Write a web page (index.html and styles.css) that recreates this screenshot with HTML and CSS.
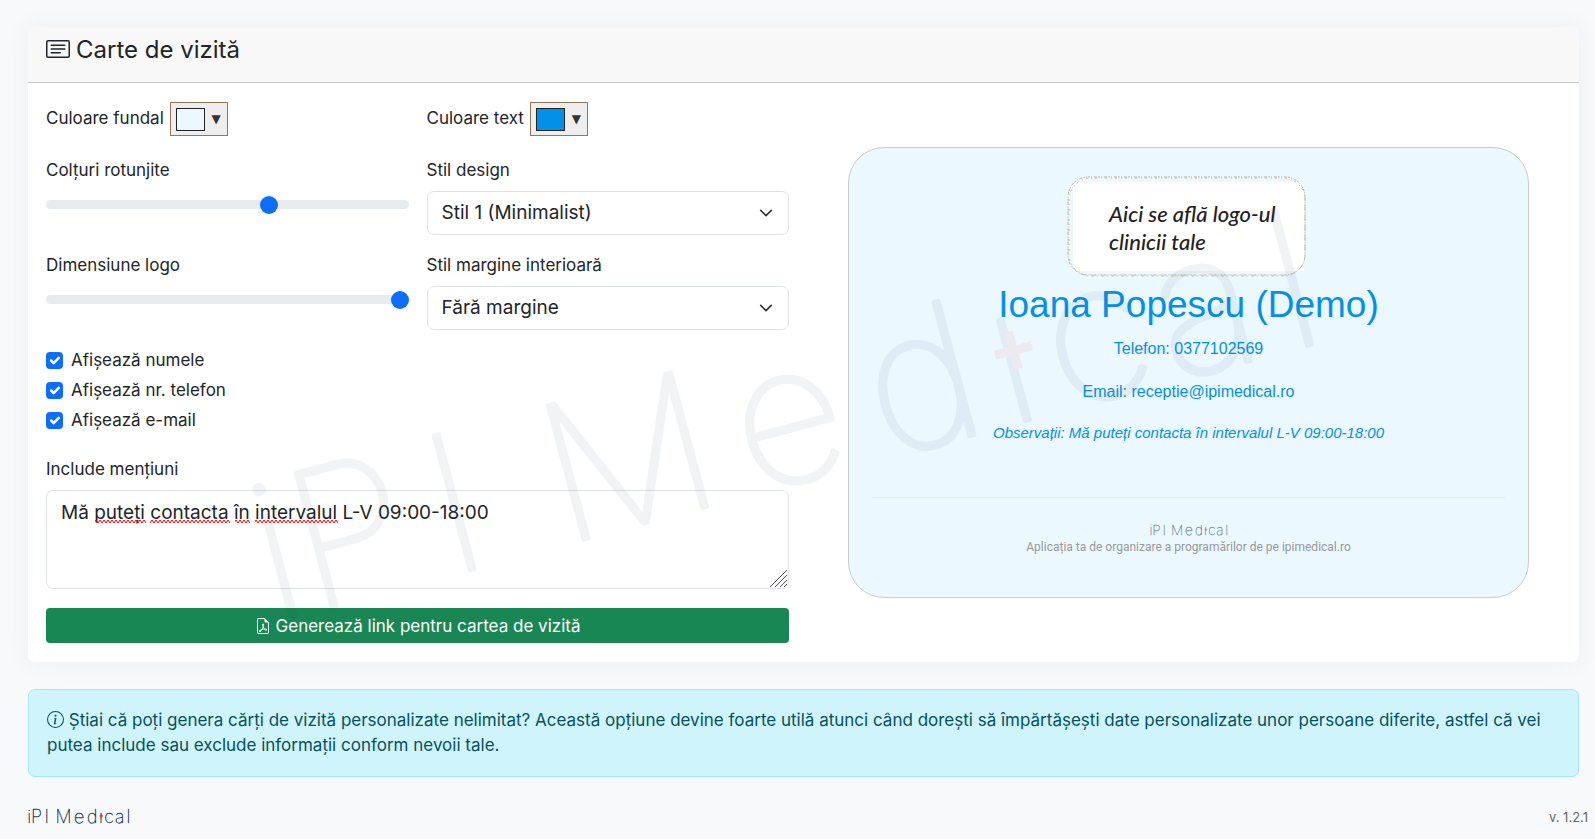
FILE: index.html
```html
<!DOCTYPE html>
<html lang="ro">
<head>
<meta charset="utf-8">
<meta name="viewport" content="width=device-width, initial-scale=1">
<title>Carte de vizită</title>
<link rel="stylesheet" href="styles.css">
</head>
<body>
<main class="page">
  <section class="card">
    <header class="card-header">
      <svg class="title-icon" viewBox="0 0 16 16" fill="currentColor" aria-hidden="true"><path d="M14.5 3a.5.5 0 0 1 .5.5v9a.5.5 0 0 1-.5.5h-13a.5.5 0 0 1-.5-.5v-9a.5.5 0 0 1 .5-.5zm-13-1A1.5 1.5 0 0 0 0 3.500v9A1.500 1.500 0 0 0 1.500 14h13a1.500 1.500 0 0 0 1.500-1.500v-9A1.500 1.500 0 0 0 14.500 2z"/><path d="M3 5.500a.5.5 0 0 1 .5-.5h9a.5.5 0 0 1 0 1h-9a.5.5 0 0 1-.5-.5M3 8a.5.5 0 0 1 .5-.5h9a.5.5 0 0 1 0 1h-9A.5.5 0 0 1 3 8m0 2.500a.5.5 0 0 1 .5-.5h6a.5.5 0 0 1 0 1h-6a.5.5 0 0 1-.5-.5"/></svg>
      <h1 class="title">Carte de vizită</h1>
    </header>
    <div class="card-body">
      <form class="settings">
        <div class="pair pair-colors">
          <div class="color-field">
            <label for="bg-color">Culoare fundal</label>
            <button type="button" id="bg-color" class="picker"><span class="swatch swatch-light"></span><span class="arrow">▼</span></button>
          </div>
          <div class="color-field">
            <label for="text-color">Culoare text</label>
            <button type="button" id="text-color" class="picker"><span class="swatch swatch-blue"></span><span class="arrow">▼</span></button>
          </div>
        </div>
        <div class="pair">
          <div class="field">
            <label for="radius">Colțuri rotunjite</label>
            <input type="range" id="radius" class="range" min="0" max="100" value="62">
          </div>
          <div class="field">
            <label for="design">Stil design</label>
            <select id="design" class="select"><option>Stil 1 (Minimalist)</option></select>
          </div>
        </div>
        <div class="pair">
          <div class="field">
            <label for="logo-size">Dimensiune logo</label>
            <input type="range" id="logo-size" class="range" min="0" max="100" value="100">
          </div>
          <div class="field">
            <label for="inner-margin">Stil margine interioară</label>
            <select id="inner-margin" class="select"><option>Fără margine</option></select>
          </div>
        </div>
        <div class="checks">
          <label class="check"><input type="checkbox" checked> Afișează numele</label>
          <label class="check"><input type="checkbox" checked> Afișează nr. telefon</label>
          <label class="check"><input type="checkbox" checked> Afișează e-mail</label>
        </div>
        <div class="field">
          <label for="notes">Include mențiuni</label>
          <div class="notes-box">
            <textarea id="notes" class="notes" spellcheck="false">Mă puteți contacta în intervalul L-V 09:00-18:00</textarea>
            <svg class="squiggles" width="320" height="4" aria-hidden="true">
              <defs><pattern id="wave" width="4" height="4" patternUnits="userSpaceOnUse"><path d="M-1 0L1 3L3 0L5 3" fill="none" stroke="#f00"/></pattern></defs>
              <path fill="url(#wave)" d="M34 0h51v4h-51zM89 0h80v4h-80zM174 0h15v4h-15zM194 0h83v4h-83z"/>
            </svg>
            <svg class="grip" viewBox="0 0 17 17" aria-hidden="true"><path d="M0 17L17 0M5 17L17 5M10 17L17 10M14 17L17 14"/></svg>
          </div>
        </div>
        <button type="button" class="generate">
          <svg class="pdf-icon" viewBox="0 0 16 16" fill="currentColor" aria-hidden="true"><path d="M14 14V4.500L9.500 0H4a2 2 0 0 0-2 2v12a2 2 0 0 0 2 2h8a2 2 0 0 0 2-2M9.500 3A1.500 1.500 0 0 0 11 4.500h2V14a1 1 0 0 1-1 1H4a1 1 0 0 1-1-1V2a1 1 0 0 1 1-1h5.500z"/><path d="M4.603 14.087a.8.8 0 0 1-.438-.42c-.195-.388-.13-.776.08-1.102.198-.307.526-.568.897-.787a7.700 7.700 0 0 1 1.482-.645 20 20 0 0 0 1.062-2.227 7.300 7.300 0 0 1-.43-1.295c-.086-.4-.119-.796-.046-1.136.075-.354.274-.672.65-.823.192-.077.4-.12.602-.077a.7.7 0 0 1 .477.365c.088.164.12.356.127.538.007.188-.012.396-.047.614-.084.510-.27 1.134-.52 1.794a11 11 0 0 0 .98 1.686 5.800 5.800 0 0 1 1.334.05c.364.066.734.195.960.465.12.144.193.320.200.518.007.192-.047.382-.138.563a1.040 1.040 0 0 1-.354.416.86.86 0 0 1-.510.138c-.331-.014-.654-.196-.933-.417a5.700 5.700 0 0 1-.911-.950 11.700 11.700 0 0 0-1.997.406 11.300 11.300 0 0 1-1.020 1.510c-.292.350-.609.656-.927.787a.8.8 0 0 1-.580.029m1.379-1.901q-.250.115-.459.238c-.328.194-.541.383-.647.547-.094.145-.096.250-.040.361q.016.032.026.044l.035-.012c.137-.056.355-.235.635-.572a8 8 0 0 0 .450-.606m1.640-1.330a13 13 0 0 1 1.010-.193 12 12 0 0 1-.510-.858 21 21 0 0 1-.500 1.050zm2.446.450q.226.245.435.410c.240.190.407.253.498.256a.1.1 0 0 0 .070-.015.300.300 0 0 0 .094-.125.440.440 0 0 0 .059-.200.100.100 0 0 0-.026-.063c-.052-.062-.200-.152-.518-.209a4 4 0 0 0-.612-.053zM8.078 7.800a7 7 0 0 0 .200-.828q.046-.282.038-.465a.600.600 0 0 0-.032-.198.500.500 0 0 0-.145.040c-.087.035-.158.106-.196.283-.040.192-.030.469.046.822q.036.167.090.346z"/></svg>
          <span>Generează link pentru cartea de vizită</span>
        </button>
      </form>

      <div class="preview">
        <article class="visit-card">
          <svg class="clinic-logo" viewBox="0 0 240 101" role="img" aria-label="Logo clinică">
            <rect x="6" y="6" width="231" height="89" fill="#fff"/>
            <rect class="dots" x="1" y="1" width="237" height="98" rx="20"/>
            <rect class="dots dots-fine" x="2" y="2" width="236" height="98" rx="22"/>
            <text x="42" y="46">Aici se află logo-ul</text>
            <text x="42" y="74">clinicii tale</text>
          </svg>
          <h2 class="person">Ioana Popescu (Demo)</h2>
          <p class="contact">Telefon: 0377102569</p>
          <p class="contact">Email: receptie@ipimedical.ro</p>
          <p class="remark">Observații: Mă puteți contacta în intervalul L-V 09:00-18:00</p>
          <hr class="rule">
          <svg class="brand-small" viewBox="0 0 1070 160" role="img" aria-label="iPI Medical">
            <text class="wordmark" y="144" x="-8 31 174 238 292 487 625 752 809 922 1044">iPI Medıcal</text>
            <path class="cross" d="M777 50v38M758 69h38"/>
          </svg>
          <p class="tagline">Aplicația ta de organizare a programărilor de pe ipimedical.ro</p>
        </article>
      </div>
    </div>
  </section>

  <p class="info">
    <svg class="info-icon" viewBox="0 0 16 16" fill="currentColor" aria-hidden="true"><path d="M8 15A7 7 0 1 1 8 1a7 7 0 0 1 0 14m0 1A8 8 0 1 0 8 0a8 8 0 0 0 0 16"/><path d="m8.930 6.588-2.290.287-.082.380.450.083c.294.070.352.176.288.469l-.738 3.468c-.194.897.105 1.319.808 1.319.545 0 1.178-.252 1.465-.598l.088-.416c-.200.176-.492.246-.686.246-.275 0-.375-.193-.304-.533zM9 4.500a1 1 0 1 1-2 0 1 1 0 0 1 2 0"/></svg>
    Știai că poți genera cărți de vizită personalizate nelimitat? Această opțiune devine foarte utilă atunci când dorești să împărtășești date personalizate unor persoane diferite, astfel că vei putea include sau exclude informații conform nevoii tale.
  </p>
</main>

<footer class="footer">
  <svg class="brand" viewBox="0 0 1070 160" role="img" aria-label="iPI Medical">
    <text class="wordmark" y="144" x="-8 31 174 238 292 487 625 752 809 922 1044">iPI Medıcal</text>
    <path class="cross" d="M777 50v38M758 69h38"/>
  </svg>
  <span class="version">v. 1.2.1</span>
</footer>

<svg class="watermark" viewBox="0 0 1595 839" aria-hidden="true">
  <g transform="translate(245 485) rotate(-15)">
    <text class="wordmark" y="140" x="-8 31 174 238 292 487 625 752 809 922 1044">iPI Medıcal</text>
    <path class="cross" d="M777 50v38M758 69h38"/>
  </g>
</svg>
</body>
</html>
```
FILE: styles.css
```css
* { box-sizing: border-box; }

body {
  margin: 0;
  background: #f8f9fb;
  color: #212529;
  font-family: Inter, "Open Sans", sans-serif;
  font-size: 17px;
  line-height: 24px;
}

h1, h2, p { margin: 0; font-weight: 400; }

.page { padding: 27px 16px 0 28px; }

.card {
  background: #fff;
  border-radius: 7px;
  box-shadow: 0 0 28px rgba(0, 0, 0, 0.05);
}

.card-header {
  display: flex;
  gap: 6px;
  padding: 7px 18px 17px;
  background: #f8f8f8;
  border-bottom: 1px solid #c8c8c8;
  border-radius: 7px 7px 0 0;
}

.title { font-size: 24px; line-height: 31px; }
.title-icon { width: 24px; height: 24px; margin-top: 3px; }

.card-body {
  display: grid;
  grid-template-columns: 743fr 772fr;
  padding: 19px 18px;
}

.pair {
  display: grid;
  grid-template-columns: 1fr 1fr;
  gap: 18px;
  margin-bottom: 18px;
}
.pair-colors { margin-bottom: 22px; }

.color-field { display: flex; align-items: center; gap: 6px; height: 34px; }
.color-field label { margin-bottom: 3px; }

.picker {
  display: flex;
  align-items: center;
  justify-content: space-between;
  width: 58px;
  height: 34px;
  padding: 0 6px 0 5px;
  border: 1px solid #9c7454;
  background: #eee;
  color: #333;
}

.swatch { width: 29px; height: 23px; border: 1px solid #222; }
.swatch-light { background: #ecf8ff; }
.swatch-blue { background: #0390e8; }
.arrow { font: 12px/14px "DejaVu Sans", sans-serif; }

.field { display: flex; flex-direction: column; gap: 9px; }

.range {
  -webkit-appearance: none;
  appearance: none;
  width: 100%;
  height: 18px;
  margin: 4px 0 0;
  background: none;
}
.range::-webkit-slider-runnable-track { height: 9px; border-radius: 9px; background: #e9ecef; }
.range::-webkit-slider-thumb {
  -webkit-appearance: none;
  width: 18px;
  height: 18px;
  margin-top: -4px;
  border-radius: 50%;
  background: #0d6efd;
}

.select {
  -webkit-appearance: none;
  appearance: none;
  width: 100%;
  height: 44px;
  padding: 0 40px 0 14px;
  border: 1px solid #dee2e6;
  border-radius: 7px;
  background: #fff url("data:image/svg+xml,%3Csvg xmlns='http://www.w3.org/2000/svg' viewBox='0 0 16 16'%3E%3Cpath fill='none' stroke='%23343a40' stroke-linecap='round' stroke-linejoin='round' stroke-width='2' d='m2 5 6 6 6-6'/%3E%3C/svg%3E") no-repeat right 15px center / 14px;
  color: #212529;
  font: inherit;
  font-size: 19px;
}

.checks { display: flex; flex-direction: column; gap: 6px; }
.check { display: flex; align-items: center; gap: 8px; }
.check input {
  -webkit-appearance: none;
  appearance: none;
  width: 17px;
  height: 17px;
  margin: 0;
  border-radius: 4px;
  background: #0d6efd url("data:image/svg+xml,%3Csvg xmlns='http://www.w3.org/2000/svg' viewBox='0 0 20 20'%3E%3Cpath fill='none' stroke='%23fff' stroke-linecap='round' stroke-linejoin='round' stroke-width='3' d='m6 10 3 3 6-6'/%3E%3C/svg%3E") center / contain;
}
.checks + .field { margin: 25px 0 19px; }

.notes-box { position: relative; }
.notes {
  display: block;
  width: 100%;
  height: 99px;
  padding: 8px 14px;
  border: 1px solid #dee2e6;
  border-radius: 7px;
  resize: none;
  color: #212529;
  font: inherit;
  font-size: 19px;
  line-height: 27px;
}
.squiggles { position: absolute; left: 15px; top: 30px; }
.grip {
  position: absolute;
  right: 2px;
  bottom: 2px;
  width: 17px;
  height: 17px;
  fill: none;
  stroke: #555;
}

.generate {
  display: flex;
  align-items: center;
  justify-content: center;
  gap: 5px;
  width: 100%;
  height: 35px;
  border: 0;
  border-radius: 4px;
  background: #198754;
  color: #fff;
  font: inherit;
}
.pdf-icon { width: 16px; height: 16px; }

.preview { padding: 45px 32px 0 59px; }

.visit-card {
  display: flex;
  flex-direction: column;
  align-items: center;
  padding: 28px 23px 42px;
  border: 1px solid #c8cacc;
  border-radius: 36px;
  background: #ecf8ff;
  color: #0390e8;
  font-family: "Liberation Sans", Arial, sans-serif;
  font-size: 16px;
  text-align: center;
}

.clinic-logo { width: 240px; height: 101px; margin-right: 3px; }
.clinic-logo text { fill: #222; font: italic 500 22px Lato, sans-serif; }
.dots { fill: none; stroke: #c8b48a; stroke-dasharray: 2 1 1 2 3 1; }
.dots-fine { stroke-dasharray: 1 3 2 4; }

.person { margin-top: 5px; font-size: 37px; line-height: 46px; }
.contact { margin-top: 9px; line-height: 24px; }
.contact + .contact { margin-top: 19px; }
.remark { margin-top: 17px; font-size: 15px; font-style: italic; }

.rule {
  width: 100%;
  margin: 52px 0 26px;
  border: 0;
  border-top: 1px solid #e1ecf2;
}
.brand-small { width: 77px; height: 13px; overflow: visible; opacity: 0.6; }
.tagline { margin-top: 2px; color: #999; font: 12px/16px Roboto, sans-serif; }

.info {
  margin-top: 27px;
  padding: 18px;
  border: 1px solid #9eeaf9;
  border-radius: 7px;
  background: #cff4fc;
  color: #055160;
  line-height: 25px;
}
.info-icon { width: 17px; height: 17px; vertical-align: -2px; }

.footer {
  display: flex;
  align-items: center;
  justify-content: space-between;
  padding: 28px 7px 0 28px;
}
.brand { width: 101px; height: 16px; overflow: visible; }
.version { color: #666; font-size: 13px; }

.wordmark {
  fill: #1e3a5c;
  stroke: #1e3a5c;
  stroke-width: 4;
  stroke-linejoin: round;
  font: 100 190px Inter, sans-serif;
}
.cross { stroke: #f00; stroke-width: 9; }

.watermark {
  position: absolute;
  inset: 0;
  width: 100%;
  height: 100%;
  opacity: 0.055;
  pointer-events: none;
}
.watermark .wordmark { stroke-width: 5; }
```
